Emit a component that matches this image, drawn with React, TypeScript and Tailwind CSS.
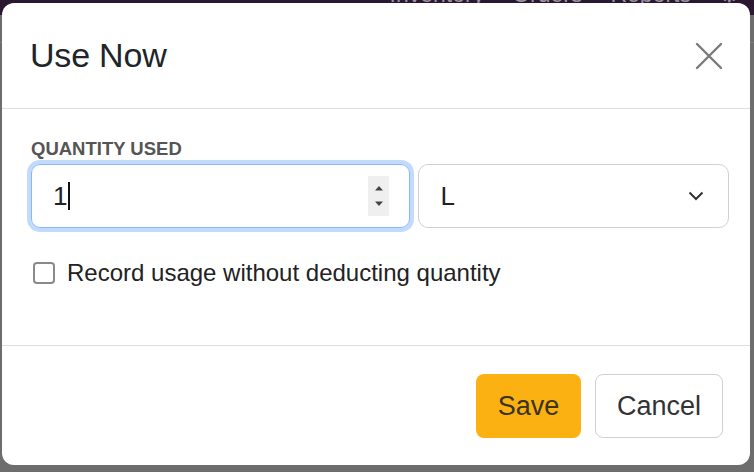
export default function App() {
  return (
    <div className="relative w-[754px] h-[472px] overflow-hidden bg-[#6d6d6d] font-[family-name:'Liberation_Sans',Arial,sans-serif]">
      {/* backdrop: dimmed app nav */}
      <div className="h-[32px] bg-[#2a1831] flex justify-end items-start gap-[28px] pr-[14px] text-[#9a92a0] text-[23px] leading-[23px] -mt-[17px]">
        <span>Inventory</span>
        <span>Orders</span>
        <span>Reports</span>
        <span>⚙</span>
      </div>
      <div className="h-[28px] border-b border-[#7c7c7c]" />

      {/* modal */}
      <div className="absolute left-[2px] top-[3px] w-[748px] h-[462px] bg-white rounded-[12px] flex flex-col">
        <div className="h-[106px] border-b border-[#dedede] flex items-center justify-between pl-[28px] pr-[26px]">
          <h2 className="text-[34px] text-[#212529] tracking-[-0.2px]">Use Now</h2>
          <svg width="28" height="28" viewBox="0 0 28 28" className="mr-[1px]">
            <path d="M2 2 L26 26 M26 2 L2 26" stroke="#7a7a7a" strokeWidth="2.4" strokeLinecap="round" />
          </svg>
        </div>

        <div className="h-[237px] border-b border-[#dedede] pl-[28px] pr-[21px] pt-[29px]">
          <div className="text-[18.5px] leading-[21px] font-bold text-[#555] uppercase ml-[1px]">Quantity used</div>
          <div className="flex items-center gap-[8px] mt-[5px]">
            <div className="w-[380px] h-[64px] rounded-[9px] border border-[#86b7fe] ring-[4px] ring-[#c2dbfd] flex items-center pl-[21px] pr-[20px] ml-[1px]">
              <span className="text-[26px] text-[#222]">1</span>
              <span className="w-[2px] h-[28px] bg-[#111] ml-[1px]" />
              <div className="ml-auto w-[21px] h-[40px] bg-[#efefef] flex flex-col items-center justify-center gap-[10px]">
                <svg width="10" height="6" viewBox="0 0 10 6"><path d="M1 5.5 L5 1 L9 5.5 Z" fill="#444" /></svg>
                <svg width="10" height="6" viewBox="0 0 10 6"><path d="M1 0.5 L5 5 L9 0.5 Z" fill="#444" /></svg>
              </div>
            </div>
            <div className="w-[311px] h-[64px] rounded-[10px] border border-[#d0d0d0] flex items-center justify-between pl-[21px] pr-[24px]">
              <span className="text-[26px] text-[#222]">L</span>
              <svg width="16" height="10" viewBox="0 0 16 10">
                <path d="M1.5 1.5 L8 8 L14.5 1.5" fill="none" stroke="#333" strokeWidth="2" />
              </svg>
            </div>
          </div>
          <div className="flex items-center gap-[12px] mt-[32px] ml-[3px]">
            <span className="w-[22px] h-[22px] rounded-[4px] border-2 border-[#8a8a8a] bg-white" />
            <span className="text-[24px] leading-[26px] text-[#222]">Record usage without deducting quantity</span>
          </div>
        </div>

        <div className="flex-1 flex items-center justify-end gap-[14px] pr-[27px] pt-[1px]">
          <button className="w-[105px] h-[64px] rounded-[8px] bg-[#fbb112] text-[27px] text-[#3a3320]">Save</button>
          <button className="w-[128px] h-[64px] rounded-[8px] border border-[#d0d0d0] bg-white text-[27px] text-[#333]">Cancel</button>
        </div>
      </div>
    </div>
  )
}
